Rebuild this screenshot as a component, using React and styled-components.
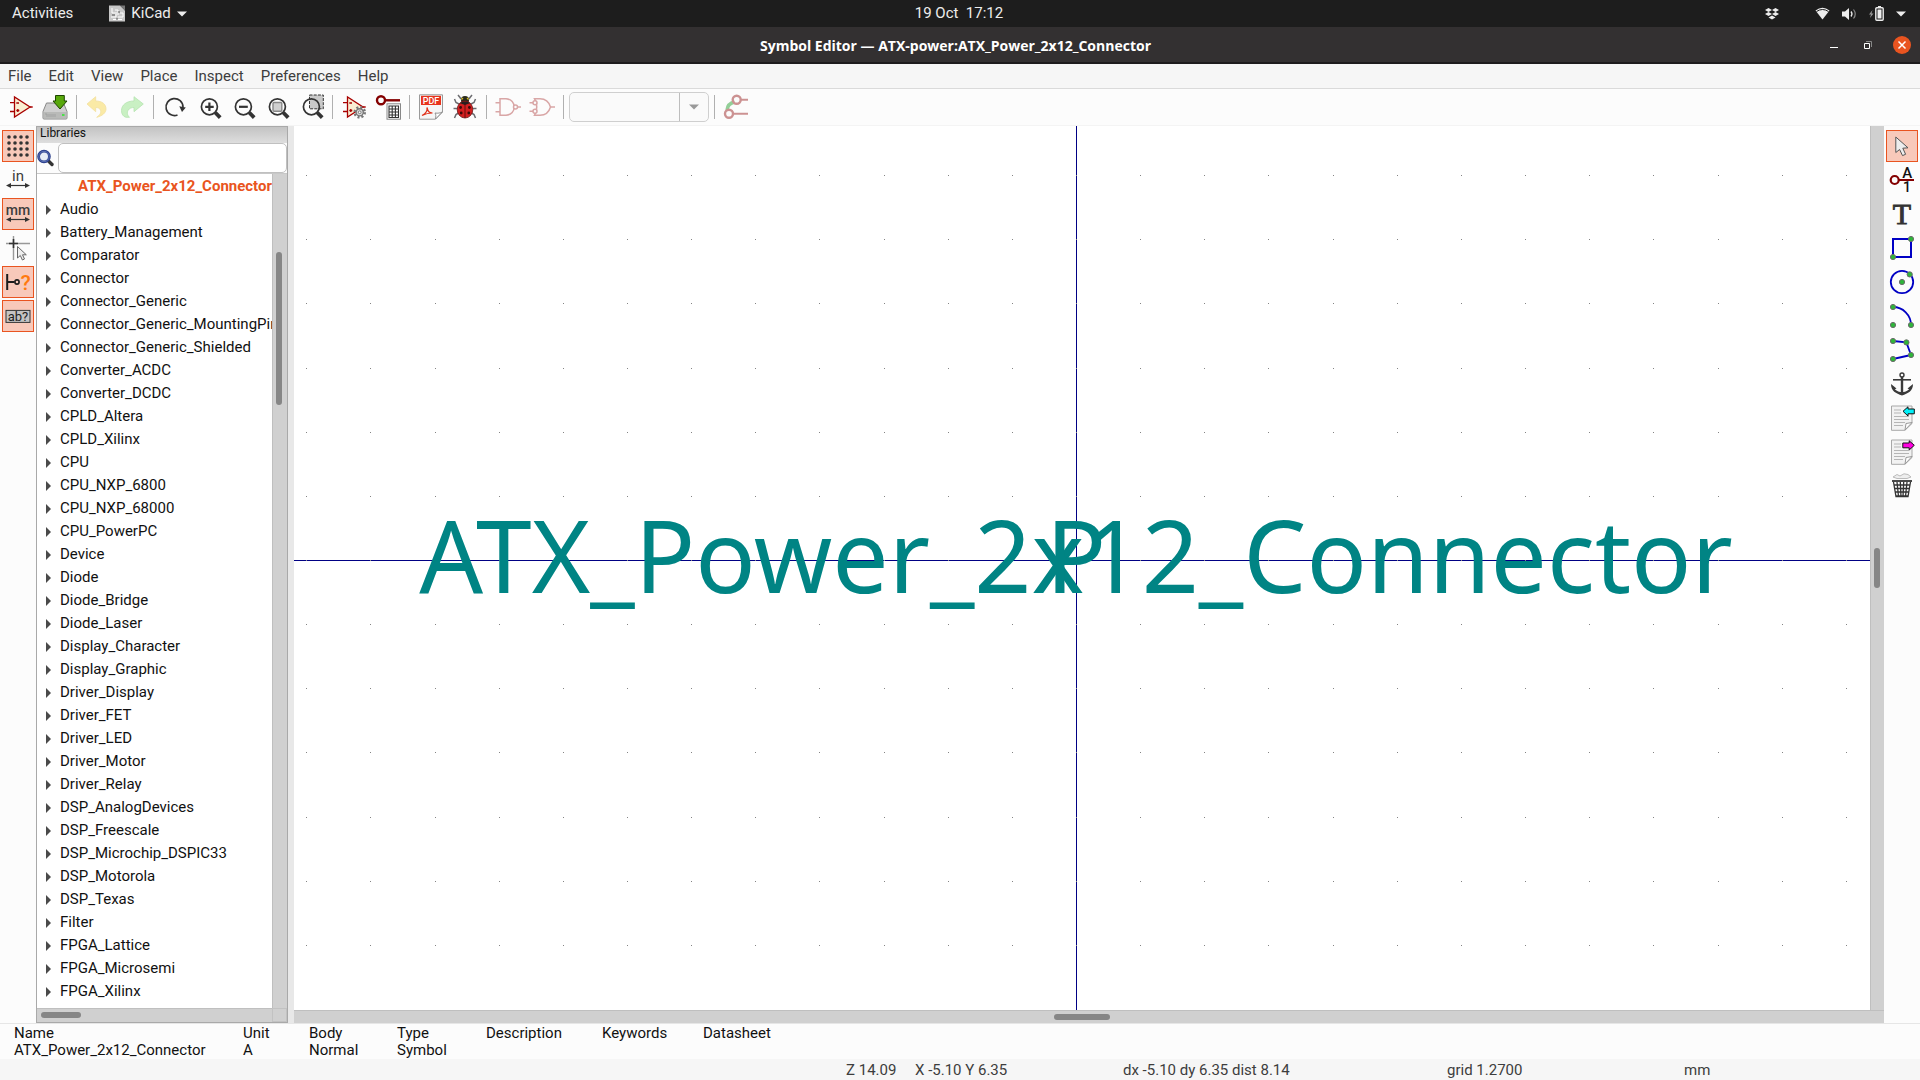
import React from 'react';
import styled, { createGlobalStyle, css } from 'styled-components';

const GlobalStyle = createGlobalStyle`
  * { box-sizing: border-box; }
  html, body { margin: 0; height: 100%; overflow: hidden; }
  body { font-family: Roboto, "Noto Sans", sans-serif; font-size: 15px; line-height: 17px; background: #fcfcfc; color: #111; }
  button, input, select { font: inherit; color: inherit; }
`;

const Screen = styled.div`
  display: flex;
  flex-direction: column;
  height: 100vh;
`;

/* desktop bar */
const TopBar = styled.header`
  display: grid;
  grid-template-columns: 1fr auto 1fr;
  align-items: center;
  height: 27px;
  flex: none;
  padding: 0 14px 0 12px;
  background: #1d1d1d;
  color: #ededed;
`;
const TopGroup = styled.div`
  display: flex;
  align-items: center;
  justify-content: ${(p) => (p.$end ? 'flex-end' : 'flex-start')};
  gap: ${(p) => p.$gap || 0}px;
`;
const BarButton = styled.button`
  display: flex;
  align-items: center;
  gap: 6px;
  padding: 0;
  border: 0;
  background: none;
  white-space: pre;
`;

/* window title */
const TitleBar = styled.div`
  display: grid;
  grid-template-columns: 1fr auto 1fr;
  align-items: center;
  height: 37px;
  flex: none;
  padding-right: 9px;
  background: #333031;
  border-bottom: 2px solid #1e1c1d;
  color: #fff;
`;
const Title = styled.h1`
  grid-column: 2;
  margin: 0;
  padding-top: 1px;
  font-family: "Open Sans", "Noto Sans", sans-serif;
  font-size: 14px;
  font-weight: 700;
`;
const WindowButtons = styled.div`
  display: flex;
  justify-content: flex-end;
  align-items: center;
  gap: 16px;
`;
const WindowButton = styled.button`
  display: grid;
  place-items: center;
  width: 18px;
  height: 18px;
  padding: 0;
  border: 0;
  border-radius: 50%;
  background: ${(p) => (p.$close ? '#e95420' : 'transparent')};
`;

const MenuBar = styled.nav`
  display: flex;
  align-items: center;
  gap: 1px;
  height: 25px;
  flex: none;
  padding-top: 1px;
  background: #f6f6f6;
  border-bottom: 1px solid #dadada;
`;
const MenuItem = styled.button`
  padding: 0 8px;
  border: 0;
  background: none;
  color: #3d3d3d;
`;

const ToolBar = styled.div`
  display: flex;
  align-items: center;
  height: 37px;
  flex: none;
  padding-left: 4px;
  background: #fcfcfc;
  border-bottom: 1px solid #f4f4f4;
`;
const ToolButton = styled.button`
  display: grid;
  place-items: center;
  width: 34px;
  height: 34px;
  padding: 0;
  border: 0;
  background: none;
`;
const Separator = styled.span`
  width: 1px;
  height: 24px;
  margin: 0 4px;
  background: #b0b0b0;
`;
const ComboBox = styled.div`
  position: relative;
  width: 140px;
  height: 30px;
  margin: 0 1px;
`;
const Combo = styled.select`
  appearance: none;
  width: 100%;
  height: 100%;
  border: 1px solid #bdbdbd;
  border-radius: 5px;
  background: #fafafa;
`;
const ComboArrow = styled.span`
  position: absolute;
  inset: 1px 1px 1px auto;
  width: 29px;
  display: grid;
  place-items: center;
  border-left: 1px solid #bdbdbd;
  pointer-events: none;
`;

const Main = styled.main`
  display: flex;
  flex: 1;
  min-height: 0;
`;
const SideBar = styled.div`
  display: flex;
  flex-direction: column;
  align-items: center;
  gap: 2px;
  width: ${(p) => p.$width}px;
  flex: none;
  padding-top: 4px;
  background: #fcfcfc;
`;
const SideButton = styled.button`
  display: grid;
  place-items: center;
  width: 32px;
  height: 32px;
  padding: 0;
  border: 1px solid transparent;
  background: none;
  ${(p) => p.$on && css`border-color: #e95420; background: #f8c9ba;`}
`;

/* library pane */
const Pane = styled.section`
  display: flex;
  flex-direction: column;
  width: 252px;
  flex: none;
  border: 1px solid #a9a9a9;
  background: #fcfcfc;
`;
const PaneTitle = styled.h2`
  margin: 0;
  padding-left: 3px;
  height: 16px;
  font-size: 12px;
  font-weight: 400;
  line-height: 13px;
  background: linear-gradient(#c3c3c3, #dedede);
`;
const SearchRow = styled.label`
  display: flex;
  align-items: center;
  gap: 4px;
`;
const SearchInput = styled.input`
  flex: 1;
  min-width: 0;
  height: 30px;
  border: 1px solid #c0c0c0;
  border-radius: 5px;
  background: #fff;
`;
const TreeArea = styled.div`
  display: grid;
  grid-template-columns: 1fr 15px;
  grid-template-rows: 1fr 14px;
  flex: 1;
  min-height: 0;
  border-top: 1px solid #c8c8c8;
`;
const Tree = styled.ul`
  margin: 0;
  padding: 1px 0 0;
  min-height: 0;
  list-style: none;
  overflow: hidden;
  background: #fff;
`;
const TreeItem = styled.li`
  display: flex;
  align-items: center;
  height: 23px;
  gap: 9px;
  padding-left: ${(p) => (p.$child ? 41 : 9)}px;
  white-space: nowrap;
  ${(p) => p.$child && css`color: #e95420; font-weight: 700;`}
`;
const Track = styled.div`
  display: flex;
  background: #d0d0d0;
  border: 0 solid #bfbfbf;
  ${(p) => (p.$vertical
    ? css`flex-direction: column; align-items: center; border-left-width: 1px; padding: ${p.$start} 2px 0 0;`
    : css`align-items: center; border-top-width: 1px; padding: 0 0 ${p.$lift || '0'} ${p.$start};`)}
`;
const Thumb = styled.div`
  flex: none;
  border-radius: 3px;
  background: #868686;
  ${(p) => (p.$vertical ? css`width: 6px; height: ${p.$size}px;` : css`height: 6px; width: ${p.$size}px;`)}
`;
const Corner = styled.div`
  background: #d0d0d0;
  border: 1px solid #c2c2c2;
`;
const Sash = styled.div`
  width: 6px;
  flex: none;
  background: #e8e8e8;
`;

const CanvasArea = styled.section`
  display: grid;
  grid-template-columns: 1fr 14px;
  grid-template-rows: 1fr 13px;
  flex: 1;
  min-width: 0;
`;
const Drawing = styled.svg`
  display: block;
  width: 100%;
  height: 100%;
  min-height: 0;
  background: #fff;
`;
const FieldText = styled.text`
  font-family: "Noto Sans", sans-serif;
  font-size: 100px;
  fill: #008484;
  text-anchor: middle;
`;

const InfoPanel = styled.div`
  flex: none;
  padding: 1px 0 0 14px;
  border-top: 1px solid #e6e6e6;
  background: #fcfcfc;
`;
const InfoTable = styled.table`
  table-layout: fixed;
  width: 790px;
  border-collapse: collapse;
  th, td { padding: 0; font-weight: 400; text-align: left; white-space: nowrap; height: 17px; }
`;
const StatusBar = styled.footer`
  display: grid;
  grid-template-columns: 1fr 69px 208px 324px 237px 236px;
  align-items: center;
  height: 21px;
  flex: none;
  padding-top: 1px;
  background: #f6f6f6;
  color: #3d3d3d;
  white-space: nowrap;
`;
const StatusField = styled.span`
  grid-column: ${(p) => p.$col};
`;
const Glyph = styled.text`
  font-family: ${(p) => (p.$serif ? '"Liberation Serif", serif' : 'Roboto, sans-serif')};
  font-size: ${(p) => p.$size}px;
  font-weight: ${(p) => p.$weight || 400};
  text-anchor: middle;
`;
const IconSvg = styled.svg`
  display: block;
  flex: none;
  overflow: visible;
`;

const Icon = ({ children, size = 26, w, h }) => (
  <IconSvg width={w || size} height={h || size} viewBox={`0 0 ${w || size} ${h || size}`} fill="none" aria-hidden="true">{children}</IconSvg>
);

const DownArrow = ({ color = '#ededed', w = 10 }) => (
  <Icon w={w} h={6}><path d={`M0 .5H${w}L${w / 2} 5.5Z`} fill={color} /></Icon>
);

const OpAmpShape = () => (
  <g stroke="#a80000" strokeWidth="1.3">
    <path d="M2 8.7H6.5M2 17.5H6.5M22 13H24.7" />
    <path d="M6.5 3V23L22 13Z" fill="#faeed2" />
    <path d="M8.3 9H11M8.3 16.5H11.3M9.8 15V18" />
  </g>
);
const Lens = ({ children, under }) => (
  <Icon>
    {under}
    <path d="M19.2 18.5L24.2 23.6" stroke="#333" strokeWidth="3.8" />
    <circle cx="13.4" cy="12.8" r="8" stroke="#333" strokeWidth="1.7" />
    {children}
  </Icon>
);
const dot = (x, y) => <circle key={`${x}-${y}`} cx={x} cy={y} r="2.6" fill="#2eb63a" stroke="#6a6a6a" />;
const Range = () => <><path d="M4 18.5H22" stroke="#333" strokeWidth="1.2" /><path d="M1 18.5L6 16V21ZM25 18.5L20 16V21Z" fill="#333" /></>;
const Page = ({ children }) => (
  <Icon>
    <path d="M2.5 1H23V18.5L16 25.3H2.5Z" fill="#f2f2f2" stroke="#a8a8a8" />
    <path d="M5 5H12M5 8H12M5 11.5H20M5 14.5H20M5 17.5H16M5 20.5H14" stroke="#b5b5b5" />
    <path d="M16 25L17 18.5L23 17.5Z" fill="#fff" stroke="#999" />
    {children}
  </Icon>
);

const icons = {
  symbol: <Icon><OpAmpShape /></Icon>,
  save: (
    <Icon>
      <path d="M4.5 9H21.5L25 17.5V24Q25 25 24 25H2Q1 25 1 24V17.5Z" fill="#cfcfcf" stroke="#888" />
      <path d="M1.5 18H24.5V24.5H1.5Z" fill="#b9bab8" />
      <path d="M3 20H5V23M7 20V23M9 20V23M11 20V23M13 20V23" stroke="#999" strokeWidth=".7" />
      <path d="M20 21H22.5" stroke="#4be04b" strokeWidth="2" />
      <path d="M13.5 1.5H22.3V7H25L18 15L11 7H13.5Z" fill="#58a80c" stroke="#1d4500" />
    </Icon>
  ),
  undo: <Icon><path d="M2 10L10.7 2.7V7C17 7 21 10 21 15C21 19 17 22 11.7 23.3C15 21 16.5 18.5 15.5 16C14.5 14 12.5 13.5 10.7 13.5V17.7Z" fill="#faeaa6" stroke="#f3dfa0" strokeWidth=".8" /></Icon>,
  redo: <Icon><path d="M24.3 10L15 2.7V7C7.5 7 2.5 11 2.5 16.5C2.5 20 4 22.5 7 23.3H10.5C8 21 8 18.5 9 16.5C10.2 14 13 13.5 15 13.5V17.7Z" fill="#c9f0c3" stroke="#b5e3b0" strokeWidth=".8" /></Icon>,
  refresh: <Icon><path d="M15.5 21A8.5 8.5 0 1 1 21 13" stroke="#333" strokeWidth="1.7" /><path d="M17.3 12.2L23.8 13.5L20 18Z" fill="#333" /></Icon>,
  zoomIn: <Lens><path d="M13.4 8.5V17M9.2 12.8H17.7" stroke="#333" strokeWidth="2.2" /></Lens>,
  zoomOut: <Lens><path d="M9 12.8H17.8" stroke="#333" strokeWidth="2.2" /></Lens>,
  zoomFit: <Lens><rect x="9" y="8.5" width="8.8" height="8.8" rx="1" fill="#d0d0d0" stroke="#888" strokeWidth="1.4" /></Lens>,
  zoomArea: <Lens under={<rect x="11.5" y="1" width="13.8" height="13.8" fill="#c9c9c9" stroke="#333" strokeDasharray="3 1.2" />} />,
  checker: (
    <Icon>
      <OpAmpShape />
      <circle cx="18.7" cy="18.3" r="4.8" stroke="#777" strokeWidth="3" strokeDasharray="1.9 1.87" />
      <circle cx="18.7" cy="18.3" r="3.6" fill="#ddd" stroke="#777" strokeWidth="1.4" />
      <circle cx="18.7" cy="18.3" r="1.4" fill="#fff" stroke="#777" />
    </Icon>
  ),
  pinTable: (
    <Icon>
      <path d="M10 6.3H25" stroke="#840000" strokeWidth="2.4" /><circle cx="6" cy="6.3" r="4" stroke="#840000" strokeWidth="2.4" />
      <rect x="12" y="9.8" width="13.5" height="15.4" fill="#fff" stroke="#888" />
      <path d="M14 12H23.5V23.5H14ZM14 15H23.5M14 18H23.5M14 21H23.5M17.2 12V23.5M20.4 12V23.5" stroke="#333" strokeWidth="1.1" />
    </Icon>
  ),
  pdf: (
    <Icon>
      <path d="M1.5 .8H24.5V18L17.5 25.2H1.5Z" fill="#f6f6f6" stroke="#9a9a9a" />
      <path d="M3 1.8H23V11H3Z" fill="#e8331c" />
      <Glyph $size={9} $weight={500} x="13" y="9.6" fill="#fff">PDF</Glyph>
      <path d="M4 21.5C8 19.5 9.5 16.5 9 13.5C10 17.5 11 19 14.5 19C11 19 7 20 4 21.5Z" stroke="#e0301a" strokeWidth="1.2" />
      <path d="M17.5 25C18 22 18 20.5 17 19C20 19.5 22 19 24.3 18Z" fill="#fff" stroke="#888" strokeWidth=".9" />
    </Icon>
  ),
  bug: (
    <Icon>
      <path d="M9 5L8 3.5L6 1M17 5L18 3.5L20 1M7 10L4 8.5L2.5 5M19 10L22 8.5L23.5 5M5.5 14.5H1.5M20.5 14.5H24.5M6.5 19L4 20.5L2.5 24M19.5 19L22 20.5L23.5 24" stroke="#6c6c70" strokeWidth="1.5" />
      <circle cx="13" cy="6" r="4" fill="#2a2a1c" /><path d="M9.5 5.5L11 4M16.5 5.5L15 4" stroke="#d8c020" strokeWidth="1.2" />
      <ellipse cx="13" cy="15.5" rx="7.8" ry="8.5" fill="#d31f20" stroke="#6a1414" strokeWidth=".8" />
      <path d="M7.5 9Q13 6 18.5 9L13 11Z" fill="#222" /><path d="M13 9V24" stroke="#4a0a0a" strokeWidth=".8" />
      <g fill="#3a0a0a"><circle cx="8.6" cy="13.5" r="1.4" /><circle cx="17.4" cy="13.5" r="1.4" /><circle cx="9.2" cy="19" r="1.4" /><circle cx="16.8" cy="19" r="1.4" /></g>
    </Icon>
  ),
  gateAnd: <Icon><g stroke="#d9a6a6" strokeWidth="1.5"><path d="M.5 8.7H5M.5 17.7H5M22.5 13H26" /><path d="M5 4.7H11C22 5.5 22 20.5 11 21.3H5Z" /><circle cx="20.5" cy="13" r="2" fill="#fcfcfc" /></g></Icon>,
  gateOr: <Icon><g stroke="#d9a6a6" strokeWidth="1.5"><path d="M.5 8.7H4M.5 17.3H4M21.5 13H26" /><path d="M5.5 4.7H11C17 4.7 20 8 21.5 13C20 18 17 21.3 11 21.3H5.5Q10 13 5.5 4.7Z" /><circle cx="6" cy="8.7" r="2" fill="#fcfcfc" /><circle cx="6" cy="17.3" r="2" fill="#fcfcfc" /></g></Icon>,
  syncPins: (
    <Icon>
      <path d="M17.7 5.8H25M10 19.8H25" stroke="#cc9292" strokeWidth="2" />
      <path d="M11.5 8C7 9 4.5 11 4 16" stroke="#93cf98" strokeWidth="3.4" />
      <circle cx="13.7" cy="5.8" r="4" stroke="#cc9292" strokeWidth="2.4" /><circle cx="6" cy="19.8" r="4" fill="#fcfcfc" stroke="#cc9292" strokeWidth="2.4" />
    </Icon>
  ),
  grid: <Icon>{[4, 10, 16, 22].flatMap((y) => [4, 10, 16, 22].map((x) => <circle key={`${x}-${y}`} cx={x} cy={y} r="1.8" fill="#333" />))}</Icon>,
  inch: <Icon><Glyph $size={15} x="13" y="14" fill="#3d3d3d">in</Glyph><Range /></Icon>,
  millimetre: <Icon><Glyph $size={14} $weight={500} x="13" y="14" fill="#3d3d3d">mm</Glyph><Range /></Icon>,
  crosshair: (
    <Icon>
      <path d="M8.5 1V25M1 8.5H25" stroke="#999" strokeWidth="1.4" /><path d="M8.5 4V13M4 8.5H13" stroke="#333" strokeWidth="1.6" />
      <path d="M12.5 11.5V23L15.3 20.5L17.4 25L19.5 24L17.5 19.8H21.3Z" fill="#eee" stroke="#666" />
    </Icon>
  ),
  pinType: <Icon><path d="M2.2 5V21M2.2 13H9.5" stroke="#1c1c1c" strokeWidth="2" /><circle cx="12" cy="13" r="2.1" stroke="#1c1c1c" strokeWidth="1.6" /><Glyph $size={21} $weight={500} x="20.5" y="20.5" fill="#ff7a0e">?</Glyph></Icon>,
  hiddenText: <Icon><rect x="1" y="7.4" width="24" height="12" fill="#c4c4c4" stroke="#333" /><Glyph $size={13} x="13" y="18" fill="#222">ab?</Glyph></Icon>,
  pointer: <Icon><path d="M6.8 4V19.5L10.6 16.5L13.5 22.6L16.6 21.3L13.8 15.2L19 14.8Z" fill="#ededed" stroke="#555" /></Icon>,
  pin: (
    <Icon>
      <path d="M9.7 13H25" stroke="#840000" strokeWidth="2" /><circle cx="5.7" cy="13" r="4" stroke="#840000" strokeWidth="2.2" />
      <Glyph $size={15} $weight={500} x="18.3" y="11" fill="#111">A</Glyph><Glyph $size={14} $weight={500} x="18" y="25" fill="#111">1</Glyph>
    </Icon>
  ),
  text: <Icon><Glyph $serif $size={30} x="13" y="23" fill="#333" stroke="#333" strokeWidth=".9">T</Glyph></Icon>,
  rect: <Icon><rect x="4" y="4" width="18" height="18" stroke="#0000c4" strokeWidth="2" />{dot(22, 4)}{dot(4, 22)}</Icon>,
  circle: <Icon><circle cx="13" cy="13" r="11.2" stroke="#0000c4" strokeWidth="1.8" />{dot(20.7, 5.4)}{dot(13, 13)}</Icon>,
  arc: <Icon><path d="M4 4A18 18 0 0 1 22 22" stroke="#0000c4" strokeWidth="1.8" />{dot(4, 4)}{dot(22, 22)}{dot(4, 22)}</Icon>,
  poly: <Icon><path d="M4 4L17.4 5.4L22 18L4 22" stroke="#0000c4" strokeWidth="1.8" />{dot(4, 4)}{dot(17.4, 5.4)}{dot(22, 18)}{dot(4, 22)}</Icon>,
  anchor: (
    <Icon>
      <circle cx="13" cy="4" r="2" stroke="#3a3a3a" strokeWidth="1.4" />
      <path d="M4 8.8H22" stroke="#3a3a3a" strokeWidth="1.6" /><path d="M13 6V22" stroke="#3a3a3a" strokeWidth="2.4" />
      <path d="M2 13L7.5 17.5L5.8 18.2C8 20.3 10.5 21 13 21C15.5 21 18 20.3 20.2 18.2L18.5 17.5L24 13C24 20 19 22.5 13 24.5C7 22.5 2 20 2 13Z" fill="#3a3a3a" />
    </Icon>
  ),
  importDoc: <Page><path d="M14 6.3L19 1.8V4H25.3V8.8H19V11Z" fill="#00f0f8" stroke="#111" /></Page>,
  exportDoc: <Page><path d="M25.3 6.3L20.2 1.8V4H13.8V8.8H20.2V11Z" fill="#ff00e0" stroke="#111" /></Page>,
  trash: (
    <Icon>
      <path d="M4 4L8 1.5L11 3L15 .8L19 1.5L22 4L18 5.5H8Z" fill="#eee" stroke="#bbb" />
      <path d="M3 8H23" stroke="#333" strokeWidth="1.8" />
      <path d="M4.5 9L7 23.5H19L21.5 9M8 9L9.5 23.5M11.3 9L12 23.5M14.7 9L14 23.5M18 9L16.5 23.5M5 12H21M5.8 15.5H20.2M6.3 19H19.7M7 23H19" stroke="#333" strokeWidth="1.3" />
    </Icon>
  ),
};

const toolbar = [
  ['symbol', 'New symbol'], ['save', 'Save'], null,
  ['undo', 'Undo'], ['redo', 'Redo'], null,
  ['refresh', 'Refresh'], ['zoomIn', 'Zoom in'], ['zoomOut', 'Zoom out'], ['zoomFit', 'Zoom to fit'], ['zoomArea', 'Zoom to selection'], null,
  ['checker', 'Symbol properties'], ['pinTable', 'Pin table'], null,
  ['pdf', 'Datasheet'], ['bug', 'Symbol checker'], null,
  ['gateAnd', 'Standard body'], ['gateOr', 'Alternate body'], null,
];
const leftTools = [['grid', 'Show grid', true], ['inch', 'Inches'], ['millimetre', 'Millimetres', true], ['crosshair', 'Cursor shape'], ['pinType', 'Pin types', true], ['hiddenText', 'Libraries tree', true]];
const rightTools = [['pointer', 'Select', true], ['pin', 'Add pin'], ['text', 'Add text'], ['rect', 'Add rectangle'], ['circle', 'Add circle'], ['arc', 'Add arc'], ['poly', 'Add lines'], ['anchor', 'Move anchor'], ['importDoc', 'Import drawing'], ['exportDoc', 'Export drawing'], ['trash', 'Delete']];
const menus = ['File', 'Edit', 'View', 'Place', 'Inspect', 'Preferences', 'Help'];
const libraries = ['Audio', 'Battery_Management', 'Comparator', 'Connector', 'Connector_Generic', 'Connector_Generic_MountingPin', 'Connector_Generic_Shielded', 'Converter_ACDC', 'Converter_DCDC', 'CPLD_Altera', 'CPLD_Xilinx', 'CPU', 'CPU_NXP_6800', 'CPU_NXP_68000', 'CPU_PowerPC', 'Device', 'Diode', 'Diode_Bridge', 'Diode_Laser', 'Display_Character', 'Display_Graphic', 'Driver_Display', 'Driver_FET', 'Driver_LED', 'Driver_Motor', 'Driver_Relay', 'DSP_AnalogDevices', 'DSP_Freescale', 'DSP_Microchip_DSPIC33', 'DSP_Motorola', 'DSP_Texas', 'Filter', 'FPGA_Lattice', 'FPGA_Microsemi', 'FPGA_Xilinx'];
const info = [['Name', 'ATX_Power_2x12_Connector', 229], ['Unit', 'A', 66], ['Body', 'Normal', 88], ['Type', 'Symbol', 89], ['Description', '', 116], ['Keywords', '', 101], ['Datasheet', '', 101]];

const ORIGIN = { x: 782, y: 434 };
const STEP = 64.15;
const gridDots = [];
for (let row = -6; row <= 6; row += 1) {
  for (let col = -12; col <= 12; col += 1) {
    gridDots.push([Math.round(ORIGIN.x + col * STEP), Math.round(ORIGIN.y + row * STEP)]);
  }
}

const SymbolCanvas = () => (
  <Drawing role="img" aria-label="Symbol drawing">
    <g shapeRendering="crispEdges">
      <rect x={ORIGIN.x} y="0" width="1" height="100%" fill="#000084" />
      <rect x="0" y={ORIGIN.y} width="100%" height="1" fill="#000084" />
      {gridDots.map(([x, y]) => <rect key={`${x}-${y}`} x={x} y={y} width="1" height="1" fill="#848484" />)}
    </g>
    <FieldText x={ORIGIN.x} y="467">ATX_Power_2x12_Connector</FieldText>
    <FieldText x={ORIGIN.x} y="467">P</FieldText>
  </Drawing>
);

export default function App() {
  return (
    <Screen>
      <GlobalStyle />
      <TopBar>
        <TopGroup $gap={36}>
          <BarButton>Activities</BarButton>
          <BarButton>
            <Icon w={16} h={17}>
              <path d="M0 .5H11L16 5.5V16.5H0Z" fill="#c8c8c8" /><path d="M11 .5H16V5.5Z" fill="#777" />
              <path d="M3 3V8H8M6 5H9V10M2 12H7V9M9 12H14V8H11M4 14.5H13" stroke="#fff" /><path d="M3 10H6M10 6V8M8 13V15" stroke="#555" />
            </Icon>
            KiCad
            <DownArrow />
          </BarButton>
        </TopGroup>
        <BarButton>19 Oct  17:12</BarButton>
        <TopGroup $end $gap={12}>
          <Icon w={38} h={14}>
            <path d="M3.5 1L7 3L3.5 5L0 3ZM10.5 1L14 3L10.5 5L7 3ZM3.5 5L7 7L3.5 9L0 7ZM10.5 5L14 7L10.5 9L7 7ZM7 8.5L10.5 10.5L7 12.5L3.5 10.5Z" fill="#ededed" />
          </Icon>
          <Icon w={15} h={13}><path d="M.5 3.5Q7.5 -2 14.5 3.5L7.5 12.5Z" fill="#ededed" /><path d="M1.5 4.5Q7.5 .5 13.5 4.5" stroke="#1d1d1d" /></Icon>
          <Icon w={15} h={14}><path d="M0 4.5H3L7 1V13L3 9.5H0Z" fill="#ededed" /><path d="M9 4.5Q11 7 9 9.5" stroke="#ededed" strokeWidth="1.3" /><path d="M11.5 2.5Q15 7 11.5 11.5" stroke="#888" strokeWidth="1.2" /></Icon>
          <Icon w={15} h={15}><path d="M3.5 4L0 8.5H2L1 12L4.5 7.5H2.5Z" fill="#999" /><rect x="6.8" y="1.8" width="7.4" height="12.4" rx="1" stroke="#ededed" strokeWidth="1.4" /><path d="M9 0H12V2H9ZM8.5 3.5H12.5V12.5H8.5Z" fill="#ededed" /></Icon>
          <DownArrow />
        </TopGroup>
      </TopBar>
      <TitleBar>
        <Title>Symbol Editor — ATX-power:ATX_Power_2x12_Connector</Title>
        <WindowButtons>
          <WindowButton aria-label="Minimise"><Icon size={10}><path d="M1 7.5H9" stroke="#fff" /></Icon></WindowButton>
          <WindowButton aria-label="Restore"><Icon size={10}><path d="M1.5 3.5H6.5V8.5H1.5Z" stroke="#fff" /><path d="M3 1.5H8.5V7" stroke="#888" /></Icon></WindowButton>
          <WindowButton $close aria-label="Close"><Icon size={10}><path d="M1.5 1.5L8.5 8.5M8.5 1.5L1.5 8.5" stroke="#fff" strokeWidth="1.5" /></Icon></WindowButton>
        </WindowButtons>
      </TitleBar>
      <MenuBar>{menus.map((m) => <MenuItem key={m}>{m}</MenuItem>)}</MenuBar>
      <ToolBar>
        {toolbar.map((t, i) => (t
          ? <ToolButton key={t[0]} aria-label={t[1]}>{icons[t[0]]}</ToolButton>
          : <Separator key={`sep${i}`} />))}
        <ComboBox>
          <Combo disabled aria-label="Unit" />
          <ComboArrow><DownArrow color="#999" /></ComboArrow>
        </ComboBox>
        <Separator />
        <ToolButton aria-label="Synchronised pins">{icons.syncPins}</ToolButton>
      </ToolBar>
      <Main>
        <SideBar $width={36}>
          {leftTools.map(([id, label, on]) => <SideButton key={id} $on={on} aria-label={label}>{icons[id]}</SideButton>)}
        </SideBar>
        <Pane>
          <PaneTitle>Libraries</PaneTitle>
          <SearchRow>
            <Icon w={17} h={18}>
              <path d="M10.5 11L15 15.5" stroke="#333" strokeWidth="3.4" strokeLinecap="round" />
              <circle cx="7" cy="7.5" r="5.4" fill="#e6ecf6" stroke="#2c3f8c" strokeWidth="2.8" /><circle cx="7" cy="7.5" r="5.2" stroke="#7088c8" strokeWidth=".7" />
            </Icon>
            <SearchInput aria-label="Filter" />
          </SearchRow>
          <TreeArea>
            <Tree>
              <TreeItem $child>ATX_Power_2x12_Connector</TreeItem>
              {libraries.map((l) => (
                <TreeItem key={l}><Icon w={5} h={10}><path d="M0 0L5 5L0 10Z" fill="#4a4a4a" /></Icon>{l}</TreeItem>
              ))}
            </Tree>
            <Track $vertical $start="78px"><Thumb $vertical $size={153} /></Track>
            <Track $start="4px" $lift="2px"><Thumb $size={40} /></Track>
            <Corner />
          </TreeArea>
        </Pane>
        <Sash />
        <CanvasArea>
          <SymbolCanvas />
          <Track $vertical $start="422px"><Thumb $vertical $size={40} /></Track>
          <Track $start="760px"><Thumb $size={56} /></Track>
          <Track />
        </CanvasArea>
        <SideBar $width={36}>
          {rightTools.map(([id, label, on]) => <SideButton key={id} $on={on} aria-label={label}>{icons[id]}</SideButton>)}
        </SideBar>
      </Main>
      <InfoPanel>
        <InfoTable>
          <colgroup>{info.map(([name, , w]) => <col key={name} width={w} />)}</colgroup>
          <thead><tr>{info.map(([name]) => <th key={name}>{name}</th>)}</tr></thead>
          <tbody><tr>{info.map(([name, value]) => <td key={name}>{value}</td>)}</tr></tbody>
        </InfoTable>
      </InfoPanel>
      <StatusBar>
        <StatusField $col={2}>Z 14.09</StatusField>
        <StatusField $col={3}>X -5.10  Y 6.35</StatusField>
        <StatusField $col={4}>dx -5.10  dy 6.35  dist 8.14</StatusField>
        <StatusField $col={5}>grid 1.2700</StatusField>
        <StatusField $col={6}>mm</StatusField>
      </StatusBar>
    </Screen>
  );
}
